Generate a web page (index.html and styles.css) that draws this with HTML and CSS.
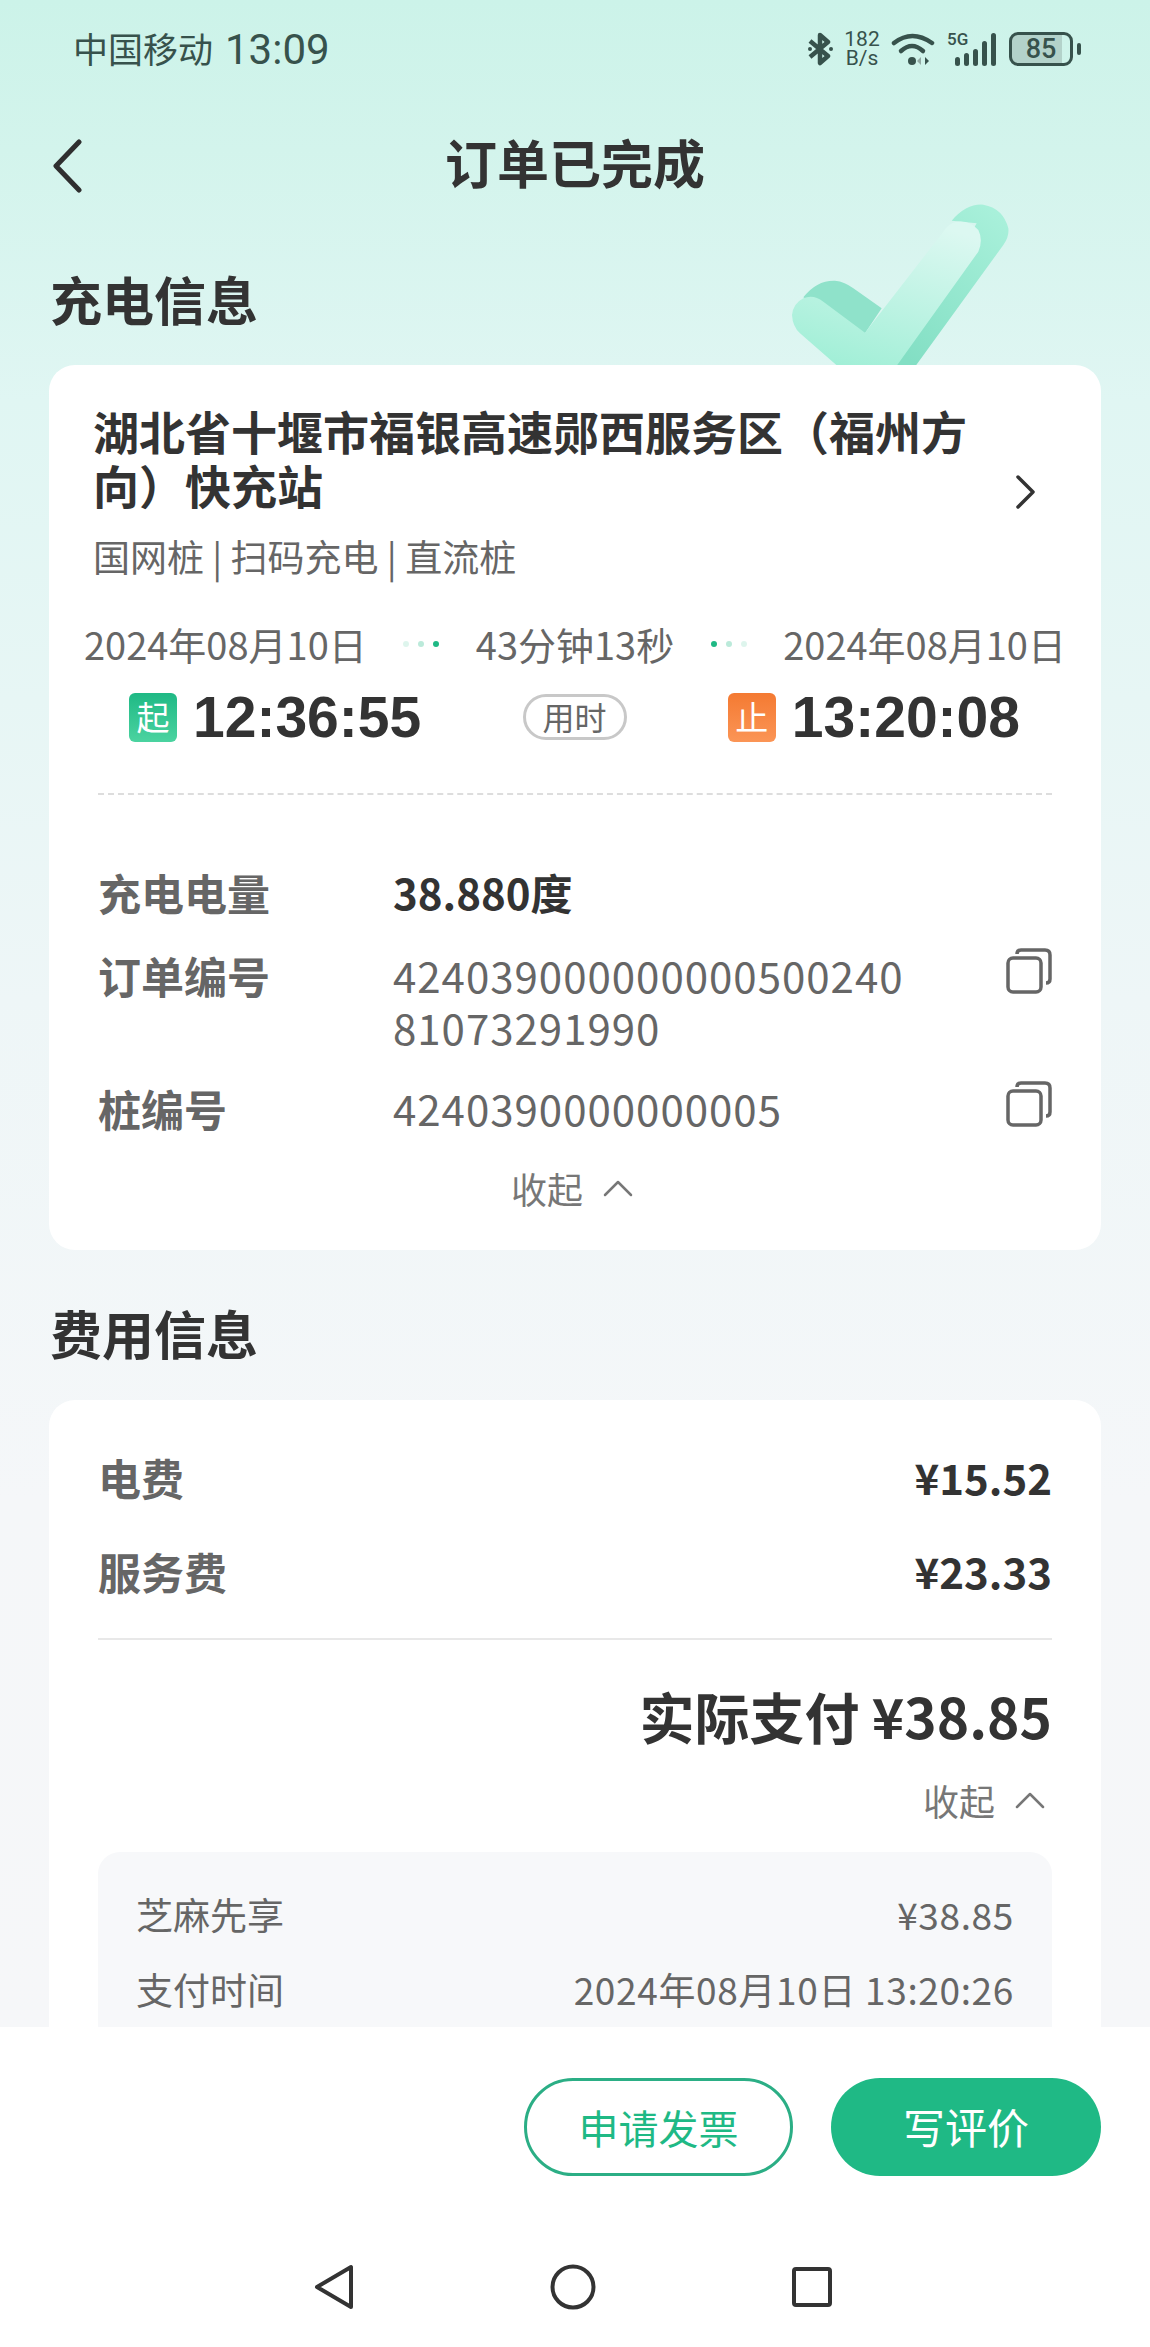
FILE: index.html
```html
<!DOCTYPE html>
<html>
	<head>
		<meta charset="utf-8">
		<title>订单已完成</title>
		<link rel="stylesheet" href="styles.css">
	</head>
	<body>
		<div class="page">
			<div class="content">
				<svg class="tick" width="260" height="190" viewBox="0 0 780 570">
					<defs>
						<linearGradient id="tickFace" x1="0.7" y1="0" x2="0.3" y2="1">
							<stop offset="0" stop-color="#dcf8f1"/>
							<stop offset="0.55" stop-color="#bdf3e3"/>
							<stop offset="1" stop-color="#a2efd7"/>
						</linearGradient>
						<linearGradient id="tickSide" x1="0.8" y1="0" x2="0.2" y2="1">
							<stop offset="0" stop-color="#a8f0da"/>
							<stop offset="1" stop-color="#83dfc4"/>
						</linearGradient>
					</defs>
					<path d="M100 322 Q140 270 195 272 Q225 275 250 295 L335 355 L285 430 Z" fill="#8fe2ca"/>
					<path d="M545 92 Q590 40 640 44 Q700 55 715 115 Q718 140 700 165 L435 530 L375 530 L620 100 Z" fill="url(#tickSide)"/>
					<path d="M100 325 Q70 340 66 375 Q68 410 90 430 L205 530 L378 530 L625 185 Q640 150 625 120 Q600 90 560 95 Q535 100 520 125 L285 428 L160 335 Q130 312 100 325 Z" fill="url(#tickFace)"/>
				</svg>

				<div class="status">
					<div class="status-left">
						<span class="carrier">中国移动</span>
						<span class="clock">13:09</span>
					</div>
					<div class="status-right">
						<svg width="26" height="34" viewBox="0 0 26 34" fill="none" stroke="#37524c" stroke-width="4.5" stroke-linejoin="round">
							<path d="M3 9 L21 24 L13 31 L13 3 L21 10 L3 25"/>
							<circle cx="3" cy="17" r="2" fill="#37524c" stroke="none"/>
							<circle cx="24" cy="17" r="2" fill="#37524c" stroke="none"/>
						</svg>
						<div class="speed"><span>182</span><span>B/s</span></div>
						<svg width="44" height="34" viewBox="0 0 44 34" fill="none" stroke="#37524c" stroke-width="4.5" stroke-linecap="round">
							<path d="M3 11 Q21 -3 41 11"/>
							<path d="M10 19 Q21 9 32 19"/>
							<circle cx="21" cy="29" r="4" fill="#37524c" stroke="none"/>
							<path d="M34 25 L38 29 L34 33 Z" fill="#37524c" stroke="none"/>
							<path d="M30 25 L26 29 L30 33 Z" fill="#93aaa4" stroke="none"/>
						</svg>
						<div class="signal">
							<span class="five-g">5G</span>
							<svg width="42" height="33" viewBox="0 0 42 33" fill="#37524c">
								<rect x="0" y="24" width="5" height="9" rx="2.5"/>
								<rect x="9" y="20" width="5" height="13" rx="2.5"/>
								<rect x="18" y="16" width="5" height="17" rx="2.5"/>
								<rect x="27" y="8" width="5" height="25" rx="2.5"/>
								<rect x="36" y="0" width="5" height="33" rx="2.5"/>
							</svg>
						</div>
						<div class="battery"><div class="battery-body">85</div><i></i></div>
					</div>
				</div>

				<div class="nav">
					<svg class="back" width="36" height="54" viewBox="0 0 36 54" fill="none" stroke="#2f2f2f" stroke-width="5" stroke-linecap="round" stroke-linejoin="round">
						<path d="M30 3 L7 27 L30 51"/>
					</svg>
					<div class="nav-title">订单已完成</div>
				</div>

				<h2 class="section-title">充电信息</h2>

				<div class="card charge">
					<div class="station">
						<div class="station-name">湖北省十堰市福银高速郧西服务区（福州方向）快充站</div>
						<svg class="station-arrow" width="22" height="36" viewBox="0 0 22 36" fill="none" stroke="#333" stroke-width="3.5" stroke-linecap="round" stroke-linejoin="round">
							<path d="M3 3 L18 18 L3 33"/>
						</svg>
					</div>
					<div class="station-sub">国网桩 | 扫码充电 | 直流桩</div>

					<div class="time-dates">
						<span>2024年08月10日</span>
						<span class="dots"><i class="d1"></i><i class="d2"></i><i class="d3"></i></span>
						<span>43分钟13秒</span>
						<span class="dots"><i class="d3"></i><i class="d2"></i><i class="d1"></i></span>
						<span>2024年08月10日</span>
					</div>
					<div class="time-clocks">
						<div class="clock-group"><span class="tag tag-start">起</span><span class="clock-time">12:36:55</span></div>
						<span class="used">用时</span>
						<div class="clock-group"><span class="tag tag-end">止</span><span class="clock-time">13:20:08</span></div>
					</div>

					<div class="dash"></div>

					<div class="info-row row-energy">
						<div class="info-label">充电电量</div>
						<div class="info-value strong">38.880度</div>
					</div>
					<div class="info-row row-order">
						<div class="info-label">订单编号</div>
						<div class="info-value">424039000000000500240<br>81073291990</div>
						<svg class="copy" width="46" height="46" viewBox="0 0 46 46" fill="none" stroke="#666" stroke-width="3.5" stroke-linejoin="round">
							<path d="M11 6 Q11 2 15 2 L39 2 Q44 2 44 7 L44 31 Q44 35 40 35"/>
							<rect x="2" y="10" width="33" height="34" rx="5"/>
						</svg>
					</div>
					<div class="info-row row-pile">
						<div class="info-label">桩编号</div>
						<div class="info-value">4240390000000005</div>
						<svg class="copy" width="46" height="46" viewBox="0 0 46 46" fill="none" stroke="#666" stroke-width="3.5" stroke-linejoin="round">
							<path d="M11 6 Q11 2 15 2 L39 2 Q44 2 44 7 L44 31 Q44 35 40 35"/>
							<rect x="2" y="10" width="33" height="34" rx="5"/>
						</svg>
					</div>
					<div class="fold fold-center">
						<span>收起</span>
						<svg width="30" height="18" viewBox="0 0 30 18" fill="none" stroke="#777" stroke-width="2.5" stroke-linecap="round" stroke-linejoin="round"><path d="M2 16 L15 3 L28 16"/></svg>
					</div>
				</div>

				<h2 class="section-title second">费用信息</h2>

				<div class="card fee">
					<div class="fee-row"><span>电费</span><b>¥15.52</b></div>
					<div class="fee-row"><span>服务费</span><b>¥23.33</b></div>
					<div class="fee-line"></div>
					<div class="fee-total">实际支付 ¥38.85</div>
					<div class="fold fold-right">
						<span>收起</span>
						<svg width="30" height="18" viewBox="0 0 30 18" fill="none" stroke="#777" stroke-width="2.5" stroke-linecap="round" stroke-linejoin="round"><path d="M2 16 L15 3 L28 16"/></svg>
					</div>
					<div class="pay-box">
						<div class="pay-row"><span>芝麻先享</span><span class="pay-num">¥38.85</span></div>
						<div class="pay-row"><span>支付时间</span><span class="pay-num">2024年08月10日 13:20:26</span></div>
					</div>
				</div>
			</div>

			<div class="footer">
				<div class="actions">
					<div class="btn btn-line">申请发票</div>
					<div class="btn btn-fill">写评价</div>
				</div>
				<div class="sysnav">
					<svg width="42" height="46" viewBox="0 0 42 46" fill="none" stroke="#333" stroke-width="4" stroke-linejoin="round"><path d="M38 3 L38 43 L4 23 Z"/></svg>
					<svg width="46" height="46" viewBox="0 0 46 46" fill="none" stroke="#333" stroke-width="4"><circle cx="23" cy="23" r="20.5"/></svg>
					<svg width="42" height="42" viewBox="0 0 42 42" fill="none" stroke="#333" stroke-width="4" stroke-linejoin="round"><rect x="3" y="3" width="36" height="36" rx="2"/></svg>
				</div>
			</div>
		</div>
	</body>
</html>
```

FILE: styles.css
```css
*{
	margin: 0;
	padding: 0;
	box-sizing: border-box;
}
html,body{
	width: 1150px;
	height: 2347px;
	overflow: hidden;
}
body{
	font-family: "Noto Sans CJK SC", "Noto Sans", sans-serif;
	color: #333;
}
.page{
	width: 1150px;
	height: 2347px;
	display: flex;
	flex-direction: column;
	background: #fff;
}
.content{
	height: 2027px;
	position: relative;
	overflow: hidden;
	background: linear-gradient(180deg, #ccf3e9 0, #d3f4ec 150px, #e0f6f3 400px, #eef6f7 1000px, #f5f7f9 1500px, #f6f7f9 100%);
}
.tick{
	position: absolute;
	left: 770px;
	top: 190px;
}

/* 状态栏 */
.status{
	height: 95px;
	padding: 3px 69px 0 73px;
	display: flex;
	justify-content: space-between;
	align-items: center;
	color: #37524c;
}
.status-left{
	display: flex;
	align-items: center;
	gap: 12px;
}
.carrier{
	padding-bottom: 4px;
	font-size: 35px;
}
.clock{
	font-size: 42px;
	font-family: "Roboto", sans-serif;
}
.status-right{
	display: flex;
	align-items: center;
	gap: 12px;
}
.speed{
	width: 34px;
	display: flex;
	flex-direction: column;
	align-items: center;
	font-family: "Roboto", sans-serif;
	font-size: 21px;
	line-height: 19px;
}
.signal{
	position: relative;
	width: 50px;
	height: 34px;
	display: flex;
	justify-content: flex-end;
	align-items: flex-end;
}
.five-g{
	position: absolute;
	left: 0;
	top: -1px;
	font-family: "Roboto", sans-serif;
	font-size: 17px;
	font-weight: 500;
	line-height: 17px;
}
.battery{
	display: flex;
	align-items: center;
	gap: 4px;
}
.battery-body{
	width: 64px;
	height: 34px;
	border: 3px solid #37524c;
	border-radius: 9px;
	background: linear-gradient(90deg, #b3d2ca 87%, transparent 87%);
	font-family: "Roboto", sans-serif;
	font-size: 27px;
	font-weight: 500;
	line-height: 28px;
	text-align: center;
}
.battery i{
	width: 4px;
	height: 12px;
	border-radius: 2px;
	background: #37524c;
}

/* 标题栏 */
.nav{
	height: 135px;
	padding-bottom: 3px;
	position: relative;
	display: flex;
	align-items: center;
}
.back{
	position: absolute;
	left: 49px;
	top: 44px;
}
.nav-title{
	width: 100%;
	text-align: center;
	font-size: 52px;
	font-weight: 700;
}
.section-title{
	height: 70px;
	margin: 34px 0 0 50px;
	font-size: 52px;
	font-weight: 700;
	line-height: 70px;
	position: relative;
}
.section-title.second{
	margin-top: 48px;
}

.card{
	width: 1052px;
	margin: 31px 0 0 49px;
	position: relative;
	background: #fff;
	border-radius: 26px;
}
.charge{
	height: 885px;
	padding-top: 38px;
}
.station{
	padding: 0 64px 0 44px;
	display: flex;
	align-items: flex-end;
	justify-content: space-between;
}
.station-name{
	width: 880px;
	font-size: 46px;
	font-weight: 700;
	line-height: 54px;
}
.station-arrow{
	margin-bottom: 1px;
}
.station-sub{
	margin: 20px 0 0 44px;
	font-size: 37px;
	line-height: 50px;
	color: #666;
}
.time-dates{
	margin-top: 38px;
	padding: 0 35px;
	display: flex;
	justify-content: space-between;
	align-items: center;
	font-size: 38px;
	line-height: 50px;
	color: #666;
}
.dots{
	display: flex;
	gap: 9px;
}
.dots i{
	width: 6px;
	height: 6px;
	border-radius: 50%;
	background: #1fb985;
}
.dots .d1{
	opacity: 0.15;
}
.dots .d2{
	opacity: 0.3;
}
.time-clocks{
	height: 54px;
	margin-top: 21px;
	padding: 0 81px 0 80px;
	display: flex;
	justify-content: space-between;
	align-items: center;
}
.clock-group{
	display: flex;
	align-items: center;
	gap: 16px;
}
.tag{
	width: 48px;
	height: 49px;
	border-radius: 6px;
	color: #fff;
	font-size: 33px;
	line-height: 47px;
	text-align: center;
}
.tag-start{
	background: linear-gradient(180deg, #1fb985, #4bd3a0);
}
.tag-end{
	background: linear-gradient(180deg, #f47a32, #fb9556);
}
.clock-time{
	font-size: 57px;
	font-weight: 700;
	line-height: 54px;
	font-family: "Liberation Sans", sans-serif;
}
.used{
	width: 104px;
	height: 46px;
	border: 3px solid #c8c8c8;
	border-radius: 23px;
	font-size: 32px;
	line-height: 38px;
	text-align: center;
	color: #666;
}
.dash{
	margin: 49px 49px 0;
	border-top: 2px dashed #ddd;
}
.info-row{
	padding: 0 49px;
	display: flex;
	position: relative;
	font-size: 42px;
	line-height: 52px;
}
.row-energy{
	margin-top: 71px;
}
.row-order{
	margin-top: 31px;
}
.row-pile{
	margin-top: 29px;
}
.info-label{
	width: 295px;
	flex: none;
	font-size: 43px;
	font-weight: 700;
	color: #666;
}
.info-value{
	letter-spacing: 1px;
	color: #666;
}
.info-value.strong{
	letter-spacing: 0;
	font-weight: 700;
	color: #333;
}
.copy{
	position: absolute;
	right: 49px;
	top: -1px;
}
.fold{
	display: flex;
	align-items: center;
	gap: 20px;
	font-size: 36px;
	line-height: 50px;
	color: #777;
}
.fold-center{
	margin-top: 29px;
	padding-right: 6px;
	justify-content: center;
}
.fold-right{
	margin-top: 24px;
	padding-right: 56px;
	justify-content: flex-end;
}
.fee{
	margin-top: 32px;
	padding-top: 53px;
}
.fee-row{
	padding: 0 49px;
	height: 48px;
	display: flex;
	justify-content: space-between;
	font-size: 42px;
	line-height: 48px;
}
.fee-row + .fee-row{
	margin-top: 46px;
}
.fee-row span{
	font-size: 43px;
	font-weight: 700;
	color: #666;
}
.fee-row b{
	color: #333;
}
.fee-line{
	margin: 43px 49px 0;
	border-top: 2px solid #e8e8e8;
}
.fee-total{
	margin-top: 39px;
	padding-right: 49px;
	text-align: right;
	font-size: 55px;
	font-weight: 700;
	line-height: 72px;
}
.pay-box{
	margin: 27px 49px 0;
	height: 300px;
	padding: 37px 38px 0;
	background: #f7f8fa;
	border-radius: 22px;
}
.pay-row{
	height: 75px;
	display: flex;
	justify-content: space-between;
	font-size: 37px;
	line-height: 50px;
	color: #666;
}
.pay-num{
	letter-spacing: 0.65px;
}

/* 底部 */
.footer{
	flex: 1;
	background: #fff;
}
.actions{
	padding: 51px 49px 0 0;
	display: flex;
	justify-content: flex-end;
	gap: 38px;
}
.btn{
	width: 269px;
	height: 98px;
	border-radius: 49px;
	font-size: 40px;
	line-height: 92px;
	text-align: center;
}
.btn-line{
	border: 3px solid #2bae85;
	color: #1fb985;
}
.btn-fill{
	width: 270px;
	background: #1fb985;
	color: #fff;
	font-size: 42px;
	line-height: 96px;
}
.sysnav{
	margin-top: 88px;
	padding-left: 313px;
	display: flex;
	align-items: center;
	gap: 195px;
}
```
